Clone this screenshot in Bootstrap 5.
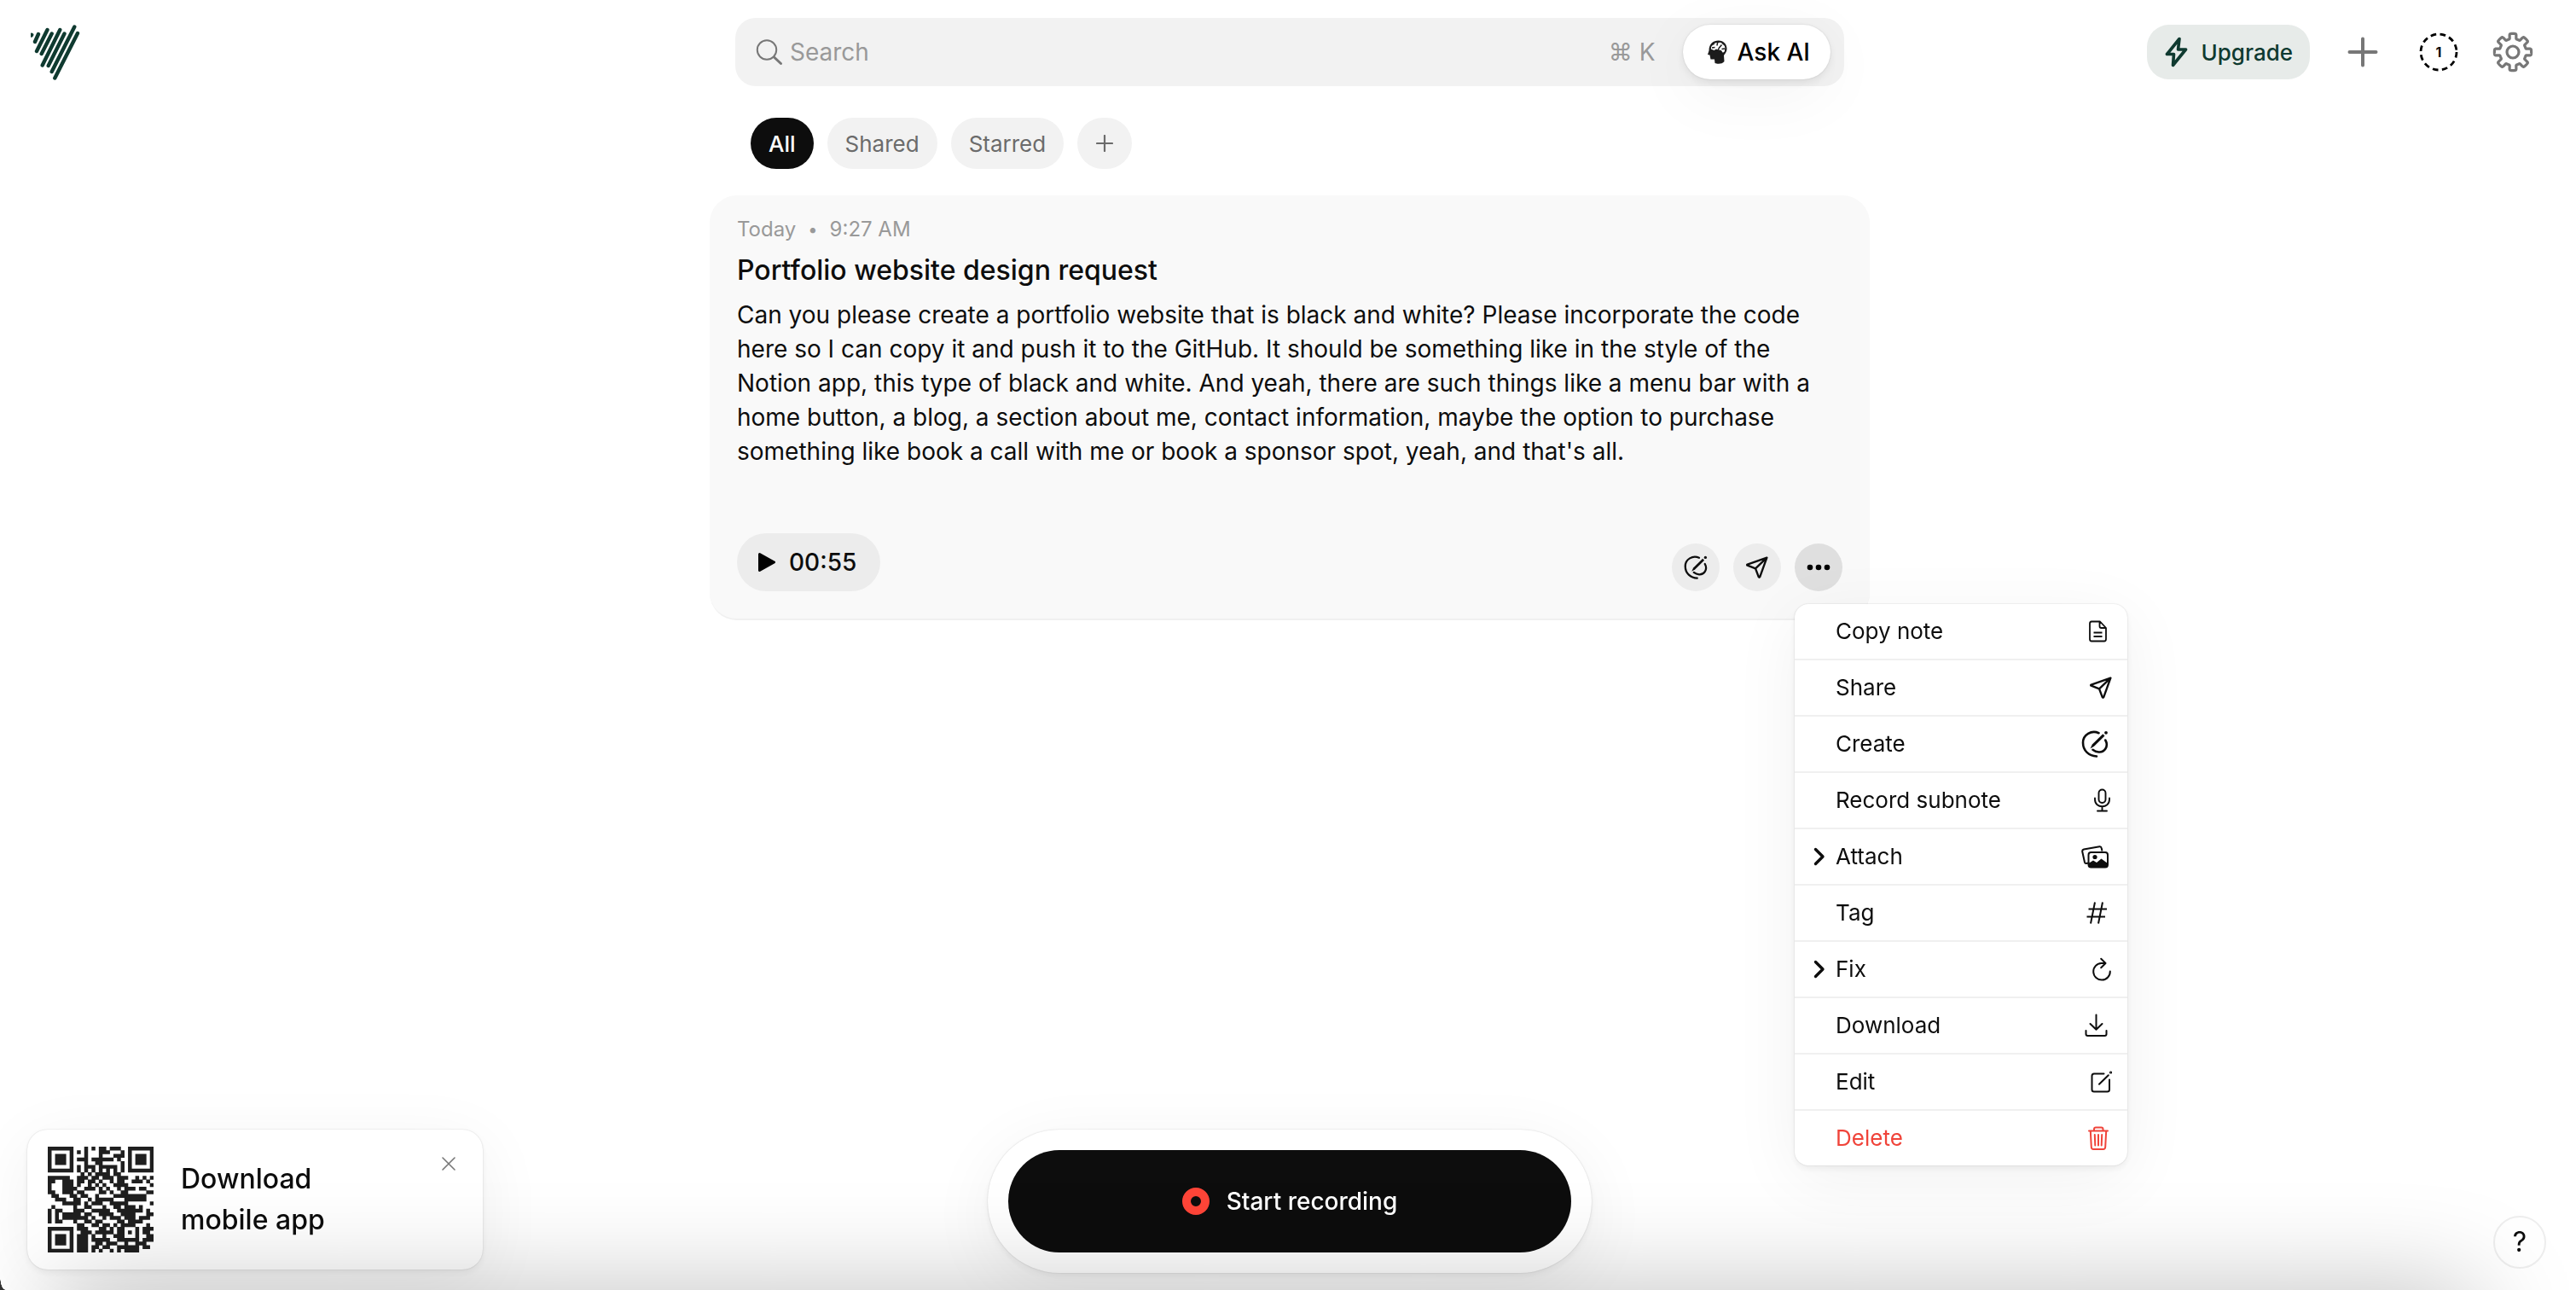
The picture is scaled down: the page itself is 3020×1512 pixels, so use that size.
<!DOCTYPE html>
<html lang="en">
<head>
<meta charset="utf-8">
<meta name="viewport" content="width=device-width, initial-scale=1">
<title>Voice notes</title>
<link href="https://cdn.jsdelivr.net/npm/bootstrap@5.3.0/dist/css/bootstrap.min.css" rel="stylesheet">
<style>
:root { --ink: #0d0d0d; --pine: #0f3a30; --float: 0 0 2px rgba(0,0,0,.18), 0 4px 8px rgba(0,0,0,.06), 0 16px 80px rgba(0,0,0,.06); }
body { font-family: Inter, "Liberation Sans", sans-serif; font-size: 28px; line-height: 40px; color: var(--ink); background: #fff; min-height: 100vh; overflow-x: hidden; padding-left: 4px; }
svg { display: block; flex: none; }
.btn { font-size: 28px; color: var(--ink); }
.topbar { display: grid; grid-template-columns: 1fr minmax(0, 1300px) 1fr; padding: 21px 32px 0; align-items: start; }
.brand { height: 80px; }
.topbar .tools { height: 80px; gap: 40px; padding-right: 18px; }
.searchbox { height: 80px; border-radius: 24px; background: #f2f2f2; padding: 0 16px 0 24px; }
.searchbox input { font-size: 28px; color: var(--ink); outline: 0; }
.searchbox input::placeholder { color: #999; opacity: 1; }
.shortcut { color: #999; }
.ask { height: 64px; border-radius: 32px; background: #fff; padding: 0 24px 0 28px; gap: 12px; font-weight: 500; color: #000; box-shadow: 0 0 2px rgba(0,0,0,.14), 0 4px 10px rgba(0,0,0,.07), 0 16px 80px rgba(0,0,0,.05); }
.upgrade { height: 64px; border-radius: 26px; background: #e7ebe9; color: var(--pine); padding: 0 20px; font-size: 26px; font-weight: 500; }
.quota { font-size: 16px; font-weight: 700; line-height: 44px; width: 46px; height: 46px; }
.quota svg { position: absolute; inset: 0; }
.feed { width: 100%; max-width: 1360px; margin: 0 auto; }
.chips { padding: 37px 48px 31px; }
.chip { height: 60px; border-radius: 30px; background: #f2f2f2; color: #6b6b6b; padding: 0 21px; font-size: 26px; }
.chip.on { background: var(--ink); color: #fff; font-weight: 500; }
.chip.add { width: 64px; padding: 0; }
.note { border-radius: 32px; background: #f9f9f9; border-bottom: 2px solid #f0f0f0; padding: 24px 32px 32px; }
.stamp { font-size: 24px; line-height: 32px; color: #999; margin-bottom: 8px; }
.stamp .dot { font-size: 20px; padding: 0 14px; }
.note h2 { font-size: 32px; line-height: 48px; font-weight: 500; margin-bottom: 8px; }
.note p { margin-bottom: 76px; }
.play { height: 68px; border-radius: 34px; background: #ececec; padding: 0 28px 0 25px; font-weight: 500; }
.disc { width: 56px; height: 56px; border-radius: 50%; background: #ececec; }
.disc.active { background: #dfdfdf; }
.notemenu { top: 100%; left: 0; margin-top: 15px; width: 390px; border: 0; border-radius: 16px; padding: 0; font-size: 26px; color: var(--ink); box-shadow: var(--float); overflow: hidden; }
.notemenu li + li { border-top: 2px solid #f0f0f0; }
.notemenu .dropdown-item { height: 64px; padding: 0 18px 0 16px; color: inherit; }
.notemenu .caret { width: 32px; padding-left: 6px; }
.notemenu .danger { color: #f0443a; }
.dockbar { display: grid; grid-template-columns: 1fr auto 1fr; padding: 0 28px 20px 32px; z-index: 5; pointer-events: none; }
.dockbar > * { pointer-events: auto; }
.promo { width: 534px; height: 164px; border-radius: 24px; background: #fff; box-shadow: var(--float); padding: 20px 32px 20px 24px; margin-bottom: 4px; font-size: 32px; line-height: 48px; font-weight: 500; gap: 32px; }
.promo .shut { margin-top: 12px; }
.recorder { border-radius: 84px; background: #fff; box-shadow: var(--float); padding: 24px; }
.recorder button { width: 660px; max-width: 100%; height: 120px; border-radius: 60px; background: var(--ink); color: #fff; font-weight: 500; gap: 20px; }
.help { width: 62px; height: 62px; border-radius: 50%; background: #fff; border: 2px solid #eee; font-size: 32px; margin: 0 7px 5px auto; }
.glow { left: 70px; right: 120px; top: 100%; height: 120px; z-index: 10; pointer-events: none; box-shadow: 0 0 120px rgba(0,0,0,.25); }
.corner { left: 0; bottom: 0; width: 6px; height: 16px; z-index: 11; background: radial-gradient(ellipse 6px 16px at 100% 0, transparent 94%, #333 100%); }
</style>
<script src="https://cdn.jsdelivr.net/npm/bootstrap@5.3.0/dist/js/bootstrap.bundle.min.js"></script>
</head>
<body>
<svg width="0" height="0" class="position-absolute" aria-hidden="true">
  <symbol id="plane" viewBox="0 0 24 24"><path d="M22.500 1.500 L1.500 8.800 Q.6 9.300 1.500 9.900 L10.200 13.200 L13.600 22.300 Q14.300 23.300 15 22.300 Z M10.200 13.200 L22 2" fill="none" stroke="currentColor" stroke-width="2.200" stroke-linejoin="round"/></symbol>
  <symbol id="create" viewBox="0 0 32 32"><g fill="none" stroke="currentColor" stroke-width="2.600" stroke-linecap="round"><path d="M20.500 3.200 C12 -.6 2 5 2 14.500 C2 24 9 30 18 30.500"/><path d="M28.300 11.500 C32.500 19 27 26 20.500 25.500 C17.500 25.300 15.300 24.300 13.500 22.800"/></g><path d="M10.500 21.500 L12.800 16.600 L25.300 4.300 L27.500 6.500 L15 18.800 Z" fill="currentColor"/><circle cx="29" cy="2.800" r="1.900" fill="currentColor"/></symbol>
  <symbol id="chev" viewBox="0 0 14 22"><path d="M2.500 2.500 L11 11 L2.500 19.500" fill="none" stroke="currentColor" stroke-width="3.400" stroke-linecap="round" stroke-linejoin="round"/></symbol>
</svg>

<header class="topbar">
  <a href="#" aria-label="Home" class="brand"><svg width="64" height="76" viewBox="36 21 64 76" fill="none" stroke="#0f3a30" stroke-width="4.400" stroke-linecap="round"><path d="M36.800 41.500 L37.200 40.800 M45 40 L41 49 M55.500 35 L43 60 M60.700 39.500 L48.700 63 M70.300 35 L49.700 76.500 M75.500 39.500 L56.700 77 M87.300 31.500 L60.700 84 M91 39 L64.300 91.500" /></svg></a>
  <form class="searchbox d-flex align-items-center" role="search">
    <label for="q" aria-label="Search"><svg width="32" height="32" viewBox="0 0 32 32" fill="none" stroke="#777" stroke-linecap="round"><circle cx="13" cy="13.500" r="11.200" stroke-width="2"/><path d="M21.500 22 L29.500 29.500" stroke-width="3"/></svg></label>
    <input id="q" type="text" class="flex-grow-1 border-0 bg-transparent p-0 ms-2" placeholder="Search">
    <span class="shortcut me-4 pe-2">⌘ K</span>
    <button type="button" class="ask btn border-0 d-flex align-items-center">
      <svg width="24" height="28" viewBox="0 0 24 28"><path d="M2.500 12.500 C2.500 4 8 .5 13.500 .5 C20 .5 23.500 5 23.500 10 C23.500 14 21 16 20 18 L20.500 25 C18 28.500 12 28 9.500 27 L9 22.500 L4.500 22.500 L3.500 17.500 L1 17 Z" fill="#1c1c1c"/><path d="M5 10.500 C4.500 7 7 5.500 8.500 5.500 C9 3 12 2.500 13 3.500 C15 1.800 18 2.800 18.500 5 C21 6 22 8.500 21 11 C21.500 13 20 15 18.500 14.500 C17.500 12 16 11 13.500 11.500 L11 10.500 L8.500 12 Z" fill="#fff"/><path d="M12.500 3 L12 6.500 M6 9 L9.500 8.500 M17.500 5.500 L14.500 9 L13 12 M21 10 L17.500 10.500" stroke="#1c1c1c" stroke-width="1.500" fill="none"/></svg>
      <span class="text-nowrap">Ask AI</span>
    </button>
  </form>
  <div class="tools d-flex align-items-center justify-content-end">
    <button class="upgrade btn border-0 d-flex align-items-center gap-3">
      <svg width="28" height="36" viewBox="0 0 28 36" fill="none" stroke="currentColor" stroke-width="3.600" stroke-linejoin="round"><path d="M18 2.500 L3.500 20.500 L11.500 20.500 L10.500 33.500 L25.500 15 L16.500 15 Z"/></svg>
      Upgrade
    </button>
    <button class="btn border-0 p-0 ms-1" aria-label="New"><svg width="36" height="36" viewBox="0 0 36 36" stroke="#777" stroke-width="4" stroke-linecap="round"><path d="M18 2.500 V33.500 M2.500 18 H33.500"/></svg></button>
    <button class="quota btn border-0 p-0 position-relative text-center ms-2" aria-label="Notes this month"><svg width="46" height="46" viewBox="0 0 46 46" fill="none" stroke="#000" stroke-width="2.800" stroke-dasharray="6.600 4.500"><circle cx="23" cy="23" r="21"/></svg>1</button>
    <button class="btn border-0 p-0" aria-label="Settings"><svg id="gear" width="48" height="48" viewBox="-24 -24 48 48" fill="none" stroke="#777" stroke-width="3.200" stroke-linejoin="round"><circle r="7"/><path/></svg></button>
  </div>
</header>

<main class="feed">
  <div class="chips d-flex gap-3">
    <button class="chip on btn border-0">All</button>
    <button class="chip btn border-0">Shared</button>
    <button class="chip btn border-0">Starred</button>
    <button class="chip add btn border-0 d-flex align-items-center justify-content-center" aria-label="Add filter"><svg width="20" height="20" viewBox="0 0 20 20" stroke="#6b6b6b" stroke-width="2.200" stroke-linecap="round"><path d="M10 1 V19 M1 10 H19"/></svg></button>
  </div>
  <article class="note">
    <div class="stamp d-flex"><span>Today</span><span class="dot">•</span><span>9:27 AM</span></div>
    <h2>Portfolio website design request</h2>
    <p>Can you please create a portfolio website that is black and white? Please incorporate the code here so I can copy it and push it to the GitHub. It should be something like in the style of the Notion app, this type of black and white. And yeah, there are such things like a menu bar with a home button, a blog, a section about me, contact information, maybe the option to purchase something like book a call with me or book a sponsor spot, yeah, and that's all.</p>
    <div class="d-flex align-items-end justify-content-between">
      <button class="play btn border-0 d-flex align-items-center gap-3"><svg width="20" height="22" viewBox="0 0 20 22"><path d="M1.500 1.500 L18.500 11 L1.500 20.500 Z" fill="#000" stroke="#000" stroke-width="3" stroke-linejoin="round"/></svg>00:55</button>
      <div class="d-flex gap-3">
        <button class="disc btn border-0 p-0 d-flex align-items-center justify-content-center" aria-label="Create"><svg width="28" height="28"><use href="#create"/></svg></button>
        <button class="disc btn border-0 p-0 d-flex align-items-center justify-content-center" aria-label="Share"><svg width="26" height="26"><use href="#plane"/></svg></button>
        <div class="position-relative">
          <button class="disc active btn border-0 p-0 d-flex align-items-center justify-content-center" aria-label="More" aria-expanded="true"><svg width="28" height="8" viewBox="0 0 28 8"><circle cx="4" cy="4" r="3.300"/><circle cx="14" cy="4" r="3.300"/><circle cx="24" cy="4" r="3.300"/></svg></button>
          <ul class="notemenu dropdown-menu show">
            <li><button class="dropdown-item d-flex align-items-center"><span class="caret"></span><span class="me-auto">Copy note</span><svg class="me-1" width="26" height="26" viewBox="0 0 26 26" fill="none" stroke="currentColor" stroke-width="1.800" stroke-linejoin="round"><path d="M6 1.500 H16 L23 9 V22 Q23 24.500 21 24.500 H6 Q4 24.500 4 22 V4 Q4 1.500 6 1.500 Z M15.500 2 V7 Q15.500 9 17.500 9 H22.500 M8.500 14.500 H18.500 M8.500 19 H18.500"/></svg></button></li>
            <li><button class="dropdown-item d-flex align-items-center"><span class="caret"></span><span class="me-auto">Share</span><svg width="26" height="26"><use href="#plane"/></svg></button></li>
            <li><button class="dropdown-item d-flex align-items-center"><span class="caret"></span><span class="me-auto">Create</span><svg class="me-1" width="32" height="32"><use href="#create"/></svg></button></li>
            <li><button class="dropdown-item d-flex align-items-center"><span class="caret"></span><span class="me-auto">Record subnote</span><svg width="24" height="28" viewBox="0 0 24 28" fill="none" stroke="currentColor" stroke-width="1.900" stroke-linecap="round"><rect x="8.500" y="1.500" width="8" height="15.500" rx="4"/><path d="M4 11.500 V13 C4 24 21 24 21 13 V11.500 M12.500 21.500 V26.500 M7 26.500 H18"/></svg></button></li>
            <li><button class="dropdown-item d-flex align-items-center"><span class="caret"><svg width="14" height="22"><use href="#chev"/></svg></span><span class="me-auto">Attach</span><svg class="me-1" width="32" height="28" viewBox="0 0 32 28"><path d="M9.500 21.500 L5.500 22 Q4.300 22 4 20.800 L1.200 8 Q1 6 3 5.500 L21.500 2.200 Q23.300 2 23.700 4 L24.500 7.500" fill="none" stroke="currentColor" stroke-width="2"/><rect x="8.500" y="9" width="22.500" height="17.500" rx="3" fill="none" stroke="currentColor" stroke-width="2"/><path d="M8.500 22 L14 18.500 L18 21 L23.500 16.500 L31 22 V25 Q31 27 29 27 H10.500 Q8.500 27 8.500 25 Z" fill="currentColor"/><circle cx="16" cy="14.500" r="2.600" fill="currentColor"/></svg></button></li>
            <li><button class="dropdown-item d-flex align-items-center"><span class="caret"></span><span class="me-auto">Tag</span><svg class="me-1" width="28" height="28" viewBox="0 0 28 28" fill="none" stroke="currentColor" stroke-width="2"><path d="M12 1.500 L7 26.500 M21 1.500 L16 26.500 M4.500 9.500 H26 M2.500 18.500 H24"/></svg></button></li>
            <li><button class="dropdown-item d-flex align-items-center"><span class="caret"><svg width="14" height="22"><use href="#chev"/></svg></span><span class="me-auto">Fix</span><svg width="26" height="28" viewBox="0 0 26 28" fill="none" stroke="currentColor" stroke-width="2" stroke-linecap="round" stroke-linejoin="round"><path d="M17.500 7 H13.500 A9.800 9.800 0 1 0 23.800 16.500 M13.200 1.800 L18.500 7 L13.200 12.300"/></svg></button></li>
            <li><button class="dropdown-item d-flex align-items-center"><span class="caret"></span><span class="me-auto">Download</span><svg class="me-1" width="28" height="28" viewBox="0 0 28 28" fill="none" stroke="currentColor" stroke-width="2" stroke-linecap="round" stroke-linejoin="round"><path d="M13.500 1.500 V18.500 M6.500 12 L13.500 18.800 L20.500 12 M1.500 20 V24 Q1.500 26 3.500 26 H23.500 Q25.500 26 25.500 24 V20"/></svg></button></li>
            <li><button class="dropdown-item d-flex align-items-center"><span class="caret"></span><span class="me-auto">Edit</span><svg width="26" height="26" viewBox="0 0 26 26" fill="none" stroke="currentColor" stroke-width="2" stroke-linecap="round"><path d="M16.500 3.500 H5 Q2.500 3.500 2.500 6 V22 Q2.500 24.500 5 24.500 H20.500 Q23 24.500 23 22 V10.500 M11 15.800 L21.800 5.200"/><circle cx="24.500" cy="2" r=".6"/></svg></button></li>
            <li><button class="dropdown-item danger d-flex align-items-center"><span class="caret"></span><span class="me-auto">Delete</span><svg class="me-1" width="24" height="28" viewBox="0 0 24 28" fill="none" stroke="currentColor" stroke-width="2" stroke-linecap="round" stroke-linejoin="round"><path d="M1 5.500 H23 M7 5.500 V3.500 Q7 1.500 9 1.500 H15.500 Q17.500 1.500 17.500 3.500 V5.500 M2.800 5.500 L3.800 24.500 Q4 27 6.200 27 H17.800 Q20 27 20.200 24.500 L21.200 5.500 M7.800 10 L8.300 22.500 M12 10 V22.500 M16.200 10 L15.700 22.500"/></svg></button></li>
          </ul>
        </div>
      </div>
    </div>
  </article>
</main>

<footer class="dockbar position-fixed bottom-0 start-0 w-100 align-items-end">
  <div class="promo d-flex align-items-center">
    <svg id="qr" width="124" height="124" viewBox="0 0 29 29" role="img" aria-label="QR code"><path fill="#1f1f1f"/></svg>
    <div>Download<br>mobile app</div>
    <button class="shut btn border-0 p-0 ms-auto align-self-start" aria-label="Close"><svg width="16" height="16" viewBox="0 0 16 16" stroke="#777" stroke-width="1.600" stroke-linecap="round"><path d="M1 1 L15 15 M15 1 L1 15"/></svg></button>
  </div>
  <div class="recorder"><button class="btn border-0 d-flex align-items-center justify-content-center"><svg width="32" height="32" viewBox="0 0 32 32"><circle cx="16" cy="16" r="11" fill="none" stroke="#ff4538" stroke-width="10"/></svg>Start recording</button></div>
  <button class="help btn p-0" aria-label="Help">?</button>
</footer>
<div class="glow position-fixed"></div>
<div class="corner position-fixed"></div>

<script>
// QR modules, one string per row
const rows = [
"11111110001010110111001111111",
"10000010101000111000101000001",
"10111010001000100011101011101",
"10111010111011111101001011101",
"10111010001001100000101011101",
"10000010101110111110101000001",
"11111110101010101010101111111",
"00000000010101111011000000000",
"11111100111011011101110010101",
"11001110110110100101100111010",
"10001110100101010011110000001",
"10001111001110101001011101100",
"11001110110000110100110000011",
"01100011011001000011111111100",
"00111001100101111100011111100",
"00001111101011100111110000001",
"01000001001100010011011101000",
"10110001110011111001111111010",
"10101111101100111100111100011",
"10101111111010010111011101110",
"10110001001101100001101111000",
"00000000110011011010111100010",
"11111110111000110101100010111",
"10000010011101111101101010110",
"10111010111010010011100010011",
"10111010111011111001111110111",
"10111010111001101110010011100",
"10000010111011011001111110110",
"11111110111010100101011110000"];
let d = "";
rows.forEach((r, y) => [...r].forEach((c, x) => { if (c === "1") d += `M${x} ${y}h1.050v1.050h-1.050z`; }));
document.querySelector("#qr path").setAttribute("d", d);

// gear outline: eight rounded teeth
let g = "";
for (let i = 0; i <= 480; i++) {
  const a = i / 480 * 2 * Math.PI;
  const r = 18.600 + 3 * Math.tanh(4.500 * (Math.cos(8 * a) + .1));
  g += (i ? "L" : "M") + (r * Math.sin(a)).toFixed(2) + " " + (-r * Math.cos(a)).toFixed(2);
}
document.querySelector("#gear path").setAttribute("d", g + "Z");
</script>
</body>
</html>
